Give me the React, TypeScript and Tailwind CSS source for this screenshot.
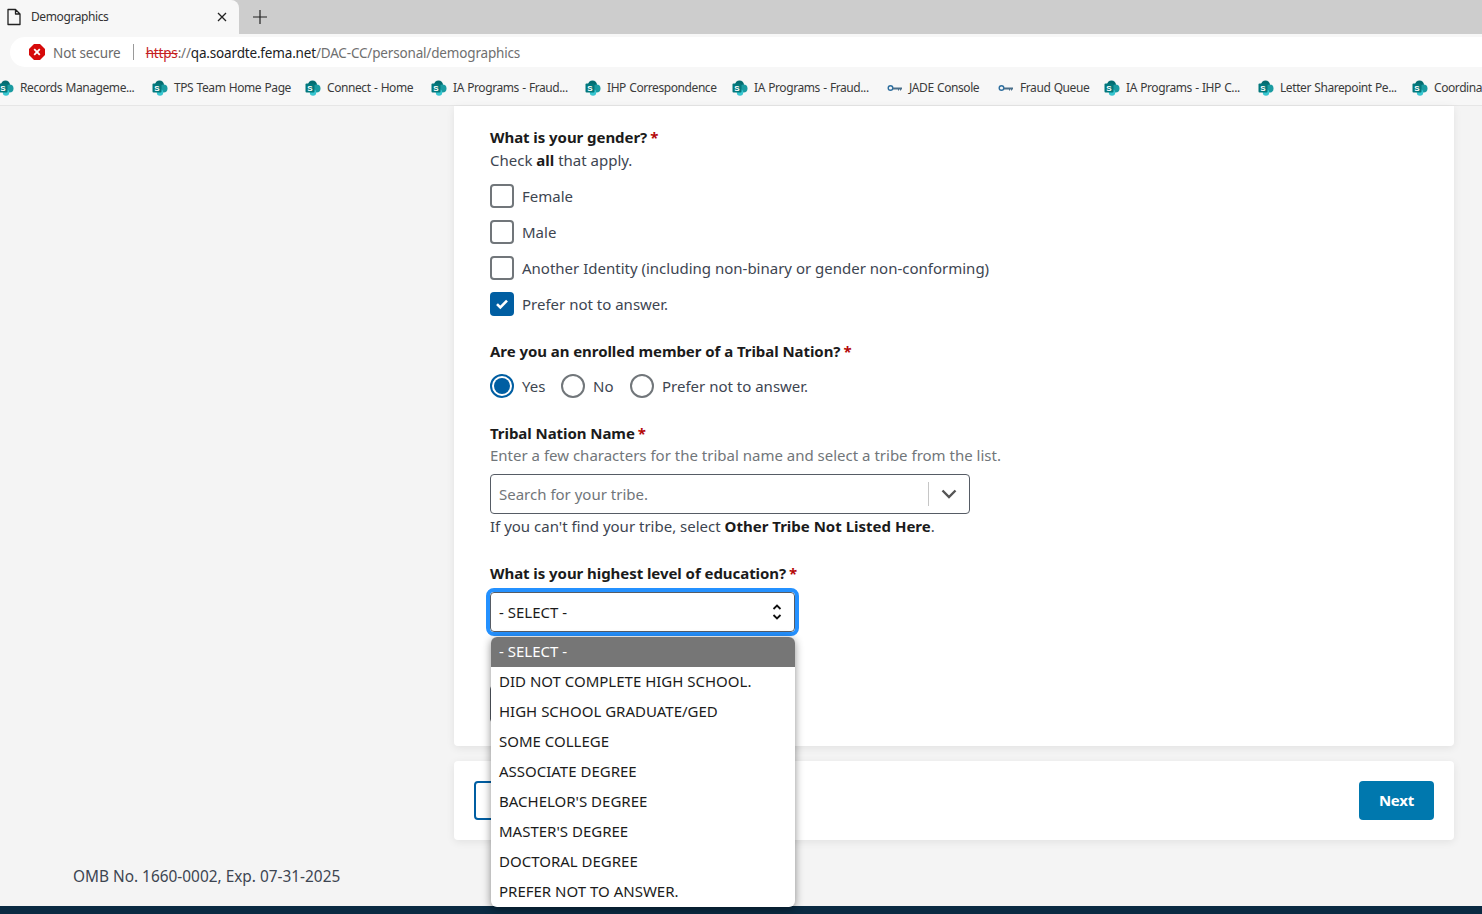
import React from "react";

function SharePoint() {
  return (
    <svg width="16" height="16" viewBox="0 0 16 16" className="shrink-0">
      <circle cx="7.5" cy="5" r="4.5" fill="#036c70" />
      <circle cx="11.5" cy="8.5" r="4" fill="#1a9ba1" />
      <circle cx="8" cy="12.5" r="3.2" fill="#37c6d0" />
      <rect x="0.5" y="3.5" width="9" height="9" rx="1" fill="#03787c" />
      <text x="5" y="11" fontSize="8" fontWeight="700" fill="#fff" textAnchor="middle" fontFamily="'Liberation Sans', sans-serif">S</text>
    </svg>
  );
}

function KeyIcon() {
  return (
    <svg width="16" height="16" viewBox="0 0 16 16" className="shrink-0">
      <circle cx="3.5" cy="8" r="2.3" fill="none" stroke="#2f6f9f" strokeWidth="1.4" />
      <path d="M6 7.5h9v2h-1v1h-1v-1h-1v1h-1v-1H6z" fill="#4a6f8a" />
    </svg>
  );
}

function Bookmark({ label, className, icon = "s" }: { label: string; className: string; icon?: string }) {
  return (
    <div className={`flex items-center shrink-0 gap-[6px] ${className}`}>
      {icon === "s" ? <SharePoint /> : <KeyIcon />}
      <span className="whitespace-nowrap text-[12px] tracking-[-0.42px] [word-spacing:0.6px] text-[#3b3b3b]">{label}</span>
    </div>
  );
}

function Check({ label, checked = false }: { label: string; checked?: boolean }) {
  return (
    <div className="flex items-center h-[24px] mb-[12px]">
      {checked ? (
        <span className="w-[24px] h-[24px] rounded-[4px] bg-[#005ea2] flex items-center justify-center">
          <svg width="14" height="12" viewBox="0 0 14 12">
            <path d="M2 6.2l3.3 3.3L12 2.6" fill="none" stroke="#fff" strokeWidth="2.6" />
          </svg>
        </span>
      ) : (
        <span className="w-[24px] h-[24px] rounded-[4px] border-2 border-[#71767a] bg-white" />
      )}
      <span className="ml-[8px] text-[#3d4551]">{label}</span>
    </div>
  );
}

function Radio({ label, checked = false, className }: { label: string; checked?: boolean; className: string }) {
  return (
    <div className={`flex items-center ${className}`}>
      {checked ? (
        <span className="w-[24px] h-[24px] rounded-full border-2 border-[#005ea2] bg-white flex items-center justify-center">
          <span className="w-[16px] h-[16px] rounded-full bg-[#005ea2]" />
        </span>
      ) : (
        <span className="w-[24px] h-[24px] rounded-full border-2 border-[#71767a] bg-white" />
      )}
      <span className="ml-[8px] text-[#3d4551]">{label}</span>
    </div>
  );
}

function Req() {
  return <span className="text-[#b50909] ml-[3px] font-bold">*</span>;
}

const options = [
  "DID NOT COMPLETE HIGH SCHOOL.",
  "HIGH SCHOOL GRADUATE/GED",
  "SOME COLLEGE",
  "ASSOCIATE DEGREE",
  "BACHELOR'S DEGREE",
  "MASTER'S DEGREE",
  "DOCTORAL DEGREE",
  "PREFER NOT TO ANSWER.",
];

export default function App() {
  return (
    <div className="w-[1482px] h-[914px] overflow-hidden flex flex-col bg-[#f4f4f4] relative font-['Noto_Sans',sans-serif] text-[15px] text-[#1b1b1b]">
      {/* Tab strip */}
      <div className="h-[34px] shrink-0 bg-[#cdcdcd] flex items-stretch">
        <div className="w-[239px] bg-[#f7f7f7] rounded-tr-[8px] flex items-center pl-[6px] pr-[12px]">
          <svg width="16" height="18" viewBox="0 0 16 18">
            <path d="M2 1.5h7.5L14 6v10.5H2z M9.5 1.5V6H14" fill="none" stroke="#222" strokeWidth="1.3" strokeLinejoin="round" />
          </svg>
          <span className="ml-[9px] text-[12px] tracking-[-0.4px] text-[#333]">Demographics</span>
          <svg width="10" height="10" viewBox="0 0 10 10" className="ml-auto">
            <path d="M1 1l8 8M9 1l-8 8" stroke="#222" strokeWidth="1.3" />
          </svg>
        </div>
        <div className="flex items-center ml-[14px]">
          <svg width="14" height="14" viewBox="0 0 14 14">
            <path d="M7 0v14M0 7h14" stroke="#222" strokeWidth="1.2" />
          </svg>
        </div>
      </div>
      {/* Address row */}
      <div className="h-[36px] shrink-0 bg-[#f7f7f7] flex items-center pl-[10px]">
        <div className="flex-1 h-[30px] rounded-l-full bg-white flex items-center pl-[19px] pt-[2px]">
          <svg width="16" height="16" viewBox="0 0 16 16" className="-mt-[2px]">
            <path d="M5 0h6l5 5v6l-5 5H5l-5-5V5z" fill="#d60a0a" />
            <path d="M5.2 5.2l5.6 5.6M10.8 5.2l-5.6 5.6" stroke="#fff" strokeWidth="1.8" />
          </svg>
          <span className="ml-[8px] text-[13.5px] tracking-[-0.1px] text-[#6b6b6b]">Not secure</span>
          <span className="ml-[12px] w-px h-[16px] bg-[#9a9a9a] -mt-[2px]" />
          <span className="ml-[12px] text-[13.5px] tracking-[-0.17px] text-[#6f6f6f] whitespace-nowrap">
            <span className="text-[#c5221f] line-through">https</span>
            <span>://</span>
            <span className="text-[#202124]">qa.soardte.fema.net</span>
            <span>/DAC-CC/personal/demographics</span>
          </span>
        </div>
      </div>
      {/* Bookmarks */}
      <div className="h-[36px] shrink-0 bg-[#f7f7f7] border-b border-[#e6e6e6] flex items-center overflow-hidden -ml-[2px]">
        <Bookmark className="w-[154px]" label="Records Manageme..." />
        <Bookmark className="w-[153px]" label="TPS Team Home Page" />
        <Bookmark className="w-[126px]" label="Connect - Home" />
        <Bookmark className="w-[154px]" label="IA Programs - Fraud..." />
        <Bookmark className="w-[147px]" label="IHP Correspondence" />
        <Bookmark className="w-[155px]" label="IA Programs - Fraud..." />
        <Bookmark className="w-[111px]" icon="k" label="JADE Console" />
        <Bookmark className="w-[106px]" icon="k" label="Fraud Queue" />
        <Bookmark className="w-[154px]" label="IA Programs - IHP C..." />
        <Bookmark className="w-[154px]" label="Letter Sharepoint Pe..." />
        <Bookmark className="w-[72px]" label="Coordina" />
      </div>

      {/* Page */}
      <div className="flex-1 flex flex-col min-h-0">
        <div className="ml-[454px] w-[1000px]">
          <div className="h-[640px] bg-white rounded-b-[4px] shadow-[0_2px_8px_rgba(0,0,0,0.08)] pl-[36px] pt-[19px] overflow-hidden">
            <div className="font-bold tracking-[-0.06px] text-[#1b1b1b] leading-[24px]">
              What is your gender?
              <Req />
            </div>
            <div className="leading-[22px] mb-[13px] text-[#3d4551]">
              Check <b className="text-[#1b1b1b]">all</b> that apply.
            </div>
            <Check label="Female" />
            <Check label="Male" />
            <Check label="Another Identity (including non-binary or gender non-conforming)" />
            <Check label="Prefer not to answer." checked />
            <div className="font-bold tracking-[-0.06px] leading-[24px] mt-[23px]">
              Are you an enrolled member of a Tribal Nation?
              <Req />
            </div>
            <div className="flex mt-[11px] h-[24px]">
              <Radio label="Yes" checked className="w-[71px]" />
              <Radio label="No" className="w-[69px]" />
              <Radio label="Prefer not to answer." className="w-[200px]" />
            </div>
            <div className="font-bold tracking-[-0.06px] leading-[24px] mt-[23px]">
              Tribal Nation Name
              <Req />
            </div>
            <div className="leading-[21px] text-[#71767a]">
              Enter a few characters for the tribal name and select a tribe from the list.
            </div>
            <div className="mt-[8px] w-[480px] h-[40px] rounded-[4px] border border-[#565c65] bg-white flex items-center pl-[8px]">
              <span className="flex-1 text-[#71767a]">Search for your tribe.</span>
              <span className="w-px h-[24px] bg-[#c6c6c6]" />
              <span className="w-[40px] pr-[1px] flex justify-center">
                <svg width="16" height="10" viewBox="0 0 16 10">
                  <path d="M1.5 1.5L8 8l6.5-6.5" fill="none" stroke="#555" strokeWidth="2.4" />
                </svg>
              </span>
            </div>
            <div className="leading-[24px] text-[#3d4551]">
              If you can't find your tribe, select <b className="text-[#1b1b1b]">Other Tribe Not Listed Here</b>.
            </div>
            <div className="font-bold tracking-[-0.06px] leading-[24px] mt-[23px]">
              What is your highest level of education?
              <Req />
            </div>
            <div className="mt-[7px] w-[305px] h-[40px] rounded-[4px] border border-[#565c65] bg-white outline-[4px] outline-[#2491ff] flex items-center pl-[8px] pr-[11px]">
              <span className="flex-1">- SELECT -</span>
              <svg width="12" height="20" viewBox="0 0 12 20">
                <path d="M2.5 7L6 3.5 9.5 7M2.5 13L6 16.5 9.5 13" fill="none" stroke="#111" strokeWidth="1.8" />
              </svg>
            </div>
            <div className="mt-[53px] w-[305px] h-[38px] rounded-[4px] border border-[#565c65] bg-white" />
          </div>

          <div className="mt-[15px] h-[79px] bg-white rounded-[4px] shadow-[0_2px_8px_rgba(0,0,0,0.08)] flex items-center justify-between px-[20px]">
            <div className="w-[120px] h-[39px] rounded-[4px] border-2 border-[#005ea2] bg-white" />
            <div className="w-[75px] h-[39px] rounded-[4px] bg-[#0078ae] text-white font-bold tracking-[-0.2px] flex items-center justify-center">
              Next
            </div>
          </div>
        </div>
        <div className="mt-[26px] ml-[73px] leading-[22px] text-[15.4px] text-[#3d4551]">OMB No. 1660-0002, Exp. 07-31-2025</div>
        <div className="mt-auto h-[8px] bg-[#0a2a42]" />
      </div>

      {/* Open list */}
      <div className="absolute left-[491px] top-[637px] w-[304px] h-[270px] rounded-[6px] overflow-hidden bg-white shadow-[0_2px_8px_rgba(0,0,0,0.45)] text-[#1b1b1b]">
        <div className="h-[30px] bg-[#767676] text-white flex items-center pl-[8px] pb-[1px]">- SELECT -</div>
        {options.map((o) => (
          <div key={o} className="h-[30px] flex items-center pl-[8px] pb-[1px] whitespace-nowrap">
            {o}
          </div>
        ))}
      </div>
    </div>
  );
}
